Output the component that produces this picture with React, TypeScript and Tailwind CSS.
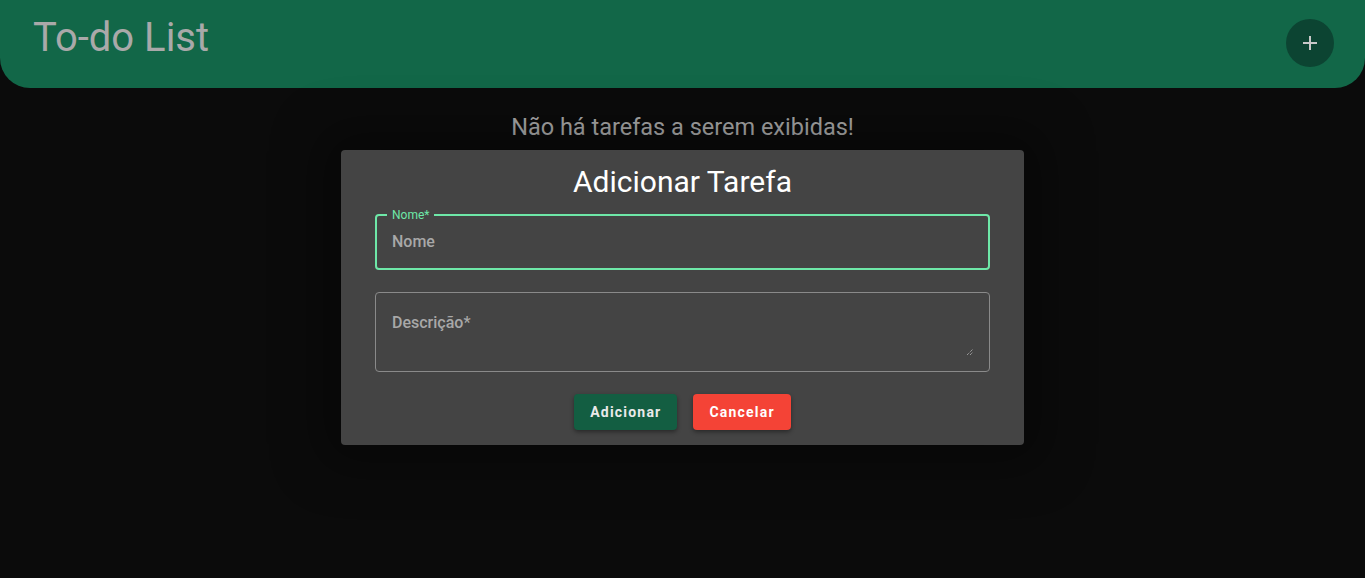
export default function App() {
  return (
    <div className="min-h-[578px] bg-[#0b0b0b] font-['Roboto',sans-serif]">
      {/* Cabeçalho */}
      <header className="h-[88px] bg-[#126748] rounded-b-[30px] flex justify-between items-start pl-[33px] pr-[31px]">
        <h1 className="text-[40px] leading-none mt-[18px] text-[#a9a9a9]">To-do List</h1>
        <button className="mt-[19px] w-[48px] h-[48px] rounded-full bg-[#0c4432] flex items-center justify-center text-[#c8c8c8]">
          <svg width="16" height="16" viewBox="0 0 16 16">
            <path d="M8 1v14M1 8h14" stroke="currentColor" strokeWidth="2" />
          </svg>
        </button>
      </header>

      <main className="flex flex-col items-center">
        <p className="mt-[23px] text-[23.5px] leading-[32px] text-[#ababab]">Não há tarefas a serem exibidas!</p>

        {/* Modal */}
        <div className="mt-[7px] w-[683px] bg-[#444444] rounded-[4px] shadow-[0_0_50px_20px_rgba(0,0,0,0.35)] px-[34px] pt-[13px] pb-[15px]">
          <h2 className="text-center text-[30px] leading-[38px] text-white">Adicionar Tarefa</h2>

          <div className="relative mt-[13px] h-[56px] border-2 border-[#6ee8a8] rounded-[4px] flex items-center px-[14px]">
            <span className="absolute -top-[9px] left-[10px] px-[5px] bg-[#444444] text-[12px] leading-[16px] text-[#6ee8a8]">Nome*</span>
            <span className="text-[16px] font-medium text-[#a8a8a8] ml-[1px]">Nome</span>
          </div>

          <div className="relative mt-[22px] h-[80px] border border-[#8a8a8a] rounded-[4px] px-[16px] pt-[18px]">
            <span className="text-[16px] font-medium text-[#a8a8a8]">Descrição*</span>
            <svg className="absolute right-[15px] bottom-[15px]" width="8" height="8" viewBox="0 0 8 8">
              <path d="M1 7L7 1M4 7L7 4" stroke="#bbb" strokeWidth="1" strokeDasharray="1 1" />
            </svg>
          </div>

          <div className="mt-[22px] flex justify-center gap-[16px]">
            <button className="h-[36px] px-[16px] rounded-[4px] bg-[#135e42] text-[14px] font-bold tracking-[1.2px] text-[#eaeaea] shadow-[0_2px_4px_rgba(0,0,0,0.4)]">
              Adicionar
            </button>
            <button className="h-[36px] px-[16px] rounded-[4px] bg-[#f44336] text-[14px] font-bold tracking-[1.2px] text-white shadow-[0_2px_4px_rgba(0,0,0,0.4)]">
              Cancelar
            </button>
          </div>
        </div>
      </main>
    </div>
  );
}
